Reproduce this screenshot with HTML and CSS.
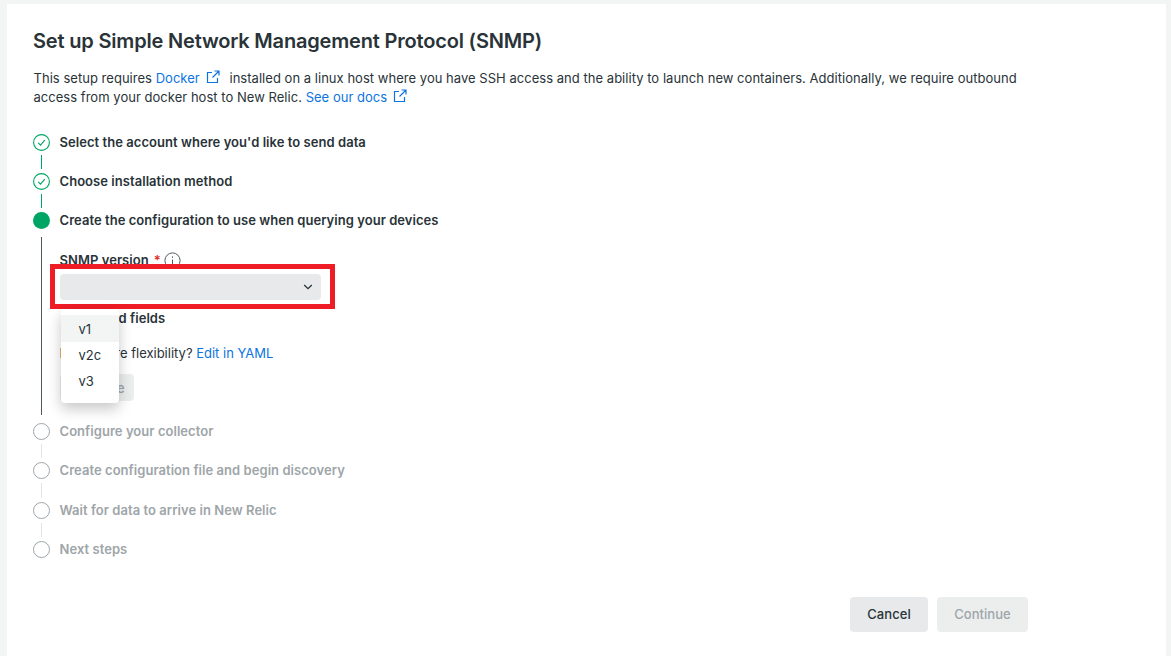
FILE: index.html
```html
<!DOCTYPE html>
<html lang="en">
<head>
<meta charset="utf-8">
<title>Set up SNMP</title>
<link rel="stylesheet" href="styles.css">
</head>
<body>
<main class="card">
  <div class="content">
    <h1 class="title">Set up Simple Network Management Protocol (SNMP)</h1>
    <p class="intro">This setup requires <a href="#" class="link">Docker<svg class="ext" viewBox="0 0 14 14"><path d="M6 2.5H1.5v10h10V8M8.5 1h4.5v4.5M13 1 6.5 7.5"/></svg></a> installed on a linux host where you have SSH access and the ability to launch new containers. Additionally, we require outbound access from your docker host to New Relic. <a href="#" class="link">See our docs<svg class="ext" viewBox="0 0 14 14"><path d="M6 2.5H1.5v10h10V8M8.5 1h4.5v4.5M13 1 6.5 7.5"/></svg></a></p>

    <ol class="steps">
      <li class="step done">
        <div class="rail">
          <svg class="dot" viewBox="0 0 17 17"><circle cx="8.5" cy="8.5" r="7.9"/><path d="m5.2 8.8 2.3 2.3 4.3-4.9"/></svg>
          <span class="line"></span>
        </div>
        <div class="body"><div class="label">Select the account where you'd like to send data</div></div>
      </li>
      <li class="step done">
        <div class="rail">
          <svg class="dot" viewBox="0 0 17 17"><circle cx="8.5" cy="8.5" r="7.9"/><path d="m5.2 8.8 2.3 2.3 4.3-4.9"/></svg>
          <span class="line"></span>
        </div>
        <div class="body"><div class="label">Choose installation method</div></div>
      </li>
      <li class="step active">
        <div class="rail">
          <span class="dot-fill"></span>
          <span class="line"></span>
        </div>
        <div class="body">
          <div class="label">Create the configuration to use when querying your devices</div>
          <div class="form">
            <div class="field-label">SNMP version <span class="req">*</span>
              <svg class="info" viewBox="0 0 17 17"><circle cx="8.5" cy="8.5" r="7.6"/><path d="M8.5 7.5v5M8.5 4.4v1.4"/></svg>
            </div>
            <div class="select-wrap">
              <div class="select">
                <svg class="chev" viewBox="0 0 10 6"><path d="m1.2 1 3.8 3.6L8.8 1"/></svg>
              </div>
              <div class="highlight"></div>
              <ul class="menu">
                <li class="opt hover">v1</li>
                <li class="opt">v2c</li>
                <li class="opt">v3</li>
              </ul>
            </div>
            <div class="advanced">Advanced fields</div>
            <div class="flex-text">Need more flexibility? <a href="#" class="link plain">Edit in YAML</a></div>
            <button class="btn small" disabled>Continue</button>
          </div>
        </div>
      </li>
      <li class="step todo">
        <div class="rail"><span class="dot-empty"></span><span class="line"></span></div>
        <div class="body"><div class="label">Configure your collector</div></div>
      </li>
      <li class="step todo">
        <div class="rail"><span class="dot-empty"></span><span class="line"></span></div>
        <div class="body"><div class="label">Create configuration file and begin discovery</div></div>
      </li>
      <li class="step todo">
        <div class="rail"><span class="dot-empty"></span><span class="line"></span></div>
        <div class="body"><div class="label">Wait for data to arrive in New Relic</div></div>
      </li>
      <li class="step todo last">
        <div class="rail"><span class="dot-empty"></span></div>
        <div class="body"><div class="label">Next steps</div></div>
      </li>
    </ol>

    <div class="footer">
      <button class="btn cancel">Cancel</button>
      <button class="btn continue" disabled>Continue</button>
    </div>
  </div>
</main>
</body>
</html>
```
FILE: styles.css
```css
* { box-sizing: border-box; }
html, body { height: 100%; }
body {
  margin: 0;
  padding: 4px 5px 0 7px;
  background: #f3f4f4;
  font-family: Inter, "Liberation Sans", sans-serif;
  color: #293338;
  overflow: hidden;
  letter-spacing: .05px;
}
.card { background: #fff; height: 652px; padding: 25px 26px 0; }
.content { width: 995px; }
.title { margin: 0; font-size: 20px; line-height: 24px; font-weight: 600; color: #293338; letter-spacing: -.18px; }
.intro { margin: 16px 0 0; padding-left: .5px; font-size: 13px; line-height: 19px; color: #293338; letter-spacing: .03px; }
.link { color: #0c74df; text-decoration: none; }
.ext { width: 14px; height: 14px; margin: 0 6px 0 6px; vertical-align: -1px; fill: none; stroke: #0c74df; stroke-width: 1.2; }
.steps { list-style: none; margin: 27px 0 0; padding: 0; }
.step { display: flex; gap: 9.5px; min-height: 39px; }
.step.todo { min-height: 39.3px; }
.step.last { min-height: 17px; }
.rail { width: 17px; flex: none; display: flex; flex-direction: column; align-items: center; }
.dot { width: 17px; height: 17px; flex: none; fill: none; stroke: #00a566; stroke-width: 1.1; }
.dot-fill { width: 17px; height: 17px; flex: none; border-radius: 50%; background: #00a566; }
.dot-empty { width: 17px; height: 17px; flex: none; border-radius: 50%; border: 1px solid #9ea5a9; }
.line { width: 1px; flex: 1; margin: 4px 0; background: #00a566; }
.step.active .line { background: #4f5a60; margin: 8px 0 8px; }
.step.todo .line { background: #e3e4e4; }
.body { flex: 1; min-width: 0; }
.label { font-size: 13px; line-height: 17px; font-weight: 600; color: #293338; }
.todo .label { color: #9ea5a9; }
.form { padding-top: 23px; height: 194px; }
.field-label { display: flex; align-items: center; font-size: 13px; line-height: 17px; font-weight: 600; height: 17px; }
.req { color: #df2d24; margin-left: 5px; }
.info { width: 17px; height: 17px; margin-left: 3px; fill: none; stroke: #4f5a60; stroke-width: 1; }
.select-wrap { position: relative; margin: 5px 0 0 .5px; width: 261px; }
.select { height: 26px; border-radius: 4px; background: #e7e9ea; display: flex; align-items: center; justify-content: flex-end; padding-right: 8px; }
.chev { width: 10px; height: 6px; fill: none; stroke: #293338; stroke-width: 1.3; }
.highlight { position: absolute; left: -10px; top: -10px; width: 285px; height: 45px; border: 5px solid #ee1c25; }
.menu { position: absolute; z-index: 2; left: .5px; top: 35px; width: 58px; height: 94px; margin: 0; padding: 6px 0 0; list-style: none; background: #fff; border-radius: 4px; box-shadow: 0 6px 14px rgba(0, 0, 0, .22); }
.opt { height: 26px; padding-left: 18px; font-size: 13px; line-height: 26px; color: #293338; }
.opt.hover { background: #f3f4f4; height: 27px; line-height: 28px; }
.advanced { margin-top: 10px; padding-left: 3px; font-size: 13px; line-height: 17px; font-weight: 600; }
.flex-text { margin-top: 18px; font-size: 13px; line-height: 17px; letter-spacing: 0; }
.btn { border: 0; border-radius: 4px; font-family: inherit; font-size: 13px; font-weight: 500; letter-spacing: inherit; }
.small { display: block; margin-top: 12px; height: 27px; width: 74px; background: #eceeee; color: #9ea5a9; }
.footer { display: flex; justify-content: flex-end; gap: 9px; margin-top: 39px; }
.cancel, .continue { height: 35px; }
.cancel { width: 78px; background: #e7e9ea; color: #293338; }
.continue { width: 91px; background: #eceeee; color: #9ea5a9; }
```
